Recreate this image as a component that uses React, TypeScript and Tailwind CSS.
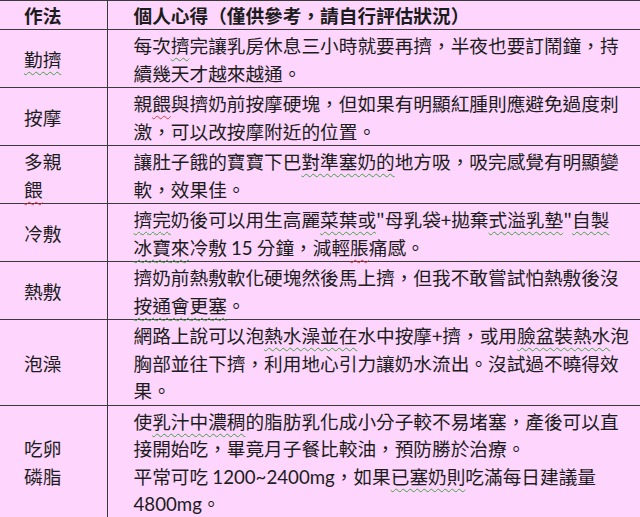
import React from "react";

const G = ({ children }: { children: React.ReactNode }) => (
  <span className="underline decoration-wavy decoration-[#3ea33e] decoration-1 underline-offset-[4px]">{children}</span>
);

const R = ({ children }: { children: React.ReactNode }) => (
  <span className="underline decoration-wavy decoration-[#e23b3b] decoration-1 underline-offset-[4px]">{children}</span>
);

const N = ({ children }: { children: React.ReactNode }) => (
  <span className="font-['Lato','Liberation_Sans',sans-serif]">{children}</span>
);

type Row = { name: React.ReactNode; lines: React.ReactNode[] };

const rows: Row[] = [
  {
    name: <G>勤擠</G>,
    lines: [
      <>每次<G>擠</G>完讓乳房休息三小時就要再擠，半夜也要訂鬧鐘，持</>,
      <>續幾天才越來越通。</>,
    ],
  },
  {
    name: <>按摩</>,
    lines: [
      <>親<R>餵</R>與擠奶前按摩硬塊，但如果有明顯紅腫則應避免過度刺</>,
      <>激，可以改按摩附近的位置。</>,
    ],
  },
  {
    name: (
      <>
        <div className="h-[27.5px]">多親</div>
        <div className="h-[27.5px]"><R>餵</R></div>
      </>
    ),
    lines: [
      <>讓肚子餓的寶寶下巴<G>對準塞奶的</G>地方吸，吸完感覺有明顯變</>,
      <>軟，效果佳。</>,
    ],
  },
  {
    name: <>冷敷</>,
    lines: [
      <>
        <G>擠完</G>奶後可以用生高麗<G>菜葉或</G>"母乳袋+拋棄<G>式溢乳墊</G>"<G>自製</G>
      </>,
      <>
        <G>冰寶來</G>冷敷 <N>15</N> 分鐘，減輕<R>脹</R>痛感。
      </>,
    ],
  },
  {
    name: <>熱敷</>,
    lines: [
      <>擠奶前熱敷軟化硬塊然後馬上擠，但我不敢嘗試怕熱敷後沒</>,
      <><G>按通會更塞</G>。</>,
    ],
  },
  {
    name: <>泡澡</>,
    lines: [
      <>網路上說可以泡<G>熱水澡並在</G>水中按摩+擠，或用<G>臉盆裝熱水</G>泡</>,
      <>胸部並往下擠，利用地心引力讓奶水流出。沒試過不曉得效</>,
      <>果。</>,
    ],
  },
  {
    name: (
      <>
        <div className="h-[27.5px]">吃卵</div>
        <div className="h-[27.5px]">磷脂</div>
      </>
    ),
    lines: [
      <>使<G>乳汁中濃稠</G>的脂肪乳化成小分子較不易堵塞，產後可以直</>,
      <>接開始吃，畢竟月子餐比較油，預防勝於治療。</>,
      <>
        平常可吃 <N>1200~2400mg</N>，如果<G>已塞奶則</G>吃滿每日建議量
      </>,
      <>
        <N>4800mg</N>。
      </>,
    ],
  },
];

export default function App() {
  return (
    <div className="w-[640px] h-[517px] overflow-hidden bg-[#fdd5fd] text-[#1c1c1c] font-['Noto_Sans_CJK_TC','Noto_Sans_CJK_SC',sans-serif] text-[18.67px] leading-[27.5px]">
      <table className="w-[640px] border-collapse table-fixed">
        <colgroup>
          <col className="w-[107px]" />
          <col />
        </colgroup>
        <thead>
          <tr className="border-t border-b border-[#3a3a3a]">
            <th className="border-r border-[#3a3a3a] pl-[24px] py-0 h-[29px] text-left font-bold">作法</th>
            <th className="pl-[26px] py-0 h-[29px] text-left font-bold whitespace-nowrap">
              個人心得（僅供參考，請自行評估狀況）
            </th>
          </tr>
        </thead>
        <tbody>
          {rows.map((row, i) => (
            <tr key={i} className="border-b border-[#3a3a3a] last:border-b-0">
              <td className="border-r border-[#3a3a3a] pl-[24px] py-[1px] align-middle">
                <div className="h-auto">{row.name}</div>
              </td>
              <td className="pl-[26px] py-[1px] align-top whitespace-nowrap">
                {row.lines.map((line, j) => (
                  <div key={j} className="h-[27.5px] overflow-visible">
                    {line}
                  </div>
                ))}
              </td>
            </tr>
          ))}
        </tbody>
      </table>
    </div>
  );
}
